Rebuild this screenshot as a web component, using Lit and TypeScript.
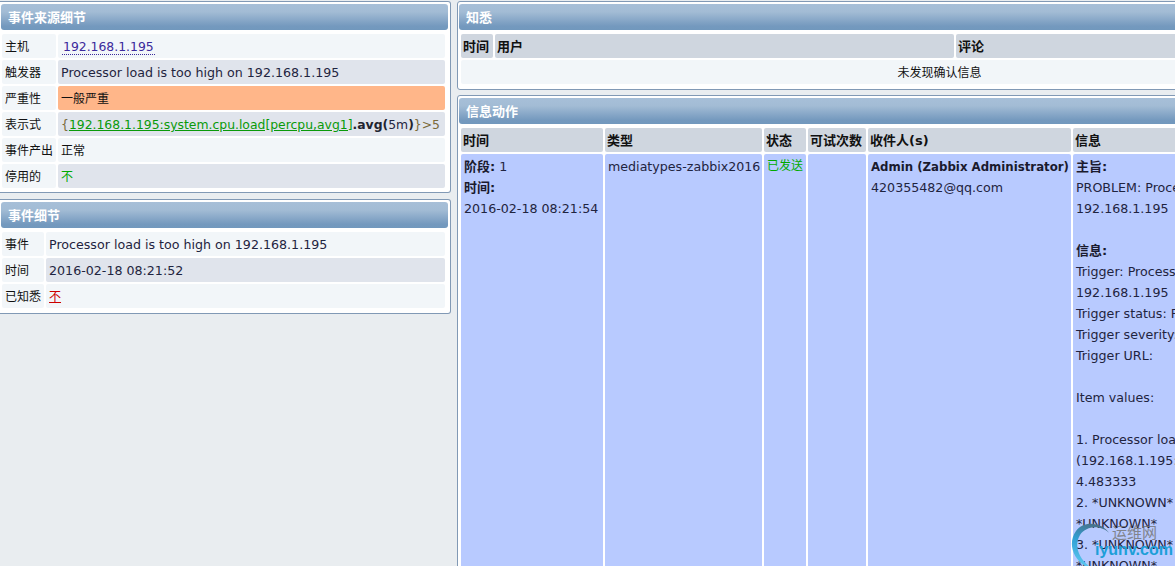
import { LitElement, html, css } from "lit";
import { customElement } from "lit/decorators.js";

const msg = ["PROBLEM: Processor load is too high on", "192.168.1.195", "\u00a0"];
const msg2 = [
  "Trigger: Processor load is too high on", "192.168.1.195", "Trigger status: PROBLEM", "Trigger severity: Average", "Trigger URL:", "\u00a0",
  "Item values:", "\u00a0", "1. Processor load (1 min average per core)", "(192.168.1.195:system.cpu.load[percpu,avg1]):", "4.483333",
  "2. *UNKNOWN* (*UNKNOWN*:*UNKNOWN*):", "*UNKNOWN*", "3. *UNKNOWN* (*UNKNOWN*:*UNKNOWN*):", "*UNKNOWN*",
];

@customElement("app-root")
export class AppRoot extends LitElement {
  static styles = css`
    :host {
      display: block; width: 1175px; height: 566px; overflow: hidden; position: relative;
      background: #e9edf0; color: #1f2430;
      font-family: "DejaVu Sans", "Noto Sans CJK SC", sans-serif; font-size: 12px;
    }
    .page { display: grid; grid-template-columns: 451px 960px; column-gap: 6px; padding-top: 1px; align-items: start; }
    .col { display: flex; flex-direction: column; gap: 6px; }
    .right { gap: 5px; }
    .panel { background: #fff; border: 1px solid #8199b5; border-left: 0; border-radius: 0 3px 3px 0; padding: 2px 2px 4px 1px; }
    .right .panel { border-left: 1px solid #8199b5; border-radius: 3px 0 0 3px; padding-left: 1px; padding-right: 0; }
    .left-panel { height: 192px; box-sizing: border-box; }
    .ev-panel { height: 115px; box-sizing: border-box; }
    .ack-panel { height: 89px; box-sizing: border-box; }
    .msg-panel { height: 600px; box-sizing: border-box; }
    .hd {
      height: 26px; line-height: 27px; padding-left: 7px; border-radius: 3px;
      background: linear-gradient(#a7bfd8 0%, #a3bcd5 30%, #7499be 85%, #7198bd 100%);
      color: #fff; font-weight: bold; font-size: 13px; margin-bottom: 4px;
    }
    .grid { display: grid; gap: 2px; padding-left: 1px; }
    .right .grid { padding-left: 2px; }
    .src { grid-template-columns: 54px 387px; grid-auto-rows: 24px; }
    .ev { grid-template-columns: 42px 399px; grid-auto-rows: 24px; }
    .ack { grid-template-columns: 32px 459px 459px; grid-auto-rows: 24px; }
    .acts { grid-template-columns: 142px 157px 42px 58px 203px 300px; grid-template-rows: 24px 500px; }
    .c { border-radius: 2px; line-height: 26px; padding-left: 3px; white-space: nowrap; background: #f2f6f9; overflow: hidden; color: #111; }
    .t { font-size: 12.65px; color: #1f2440; }
    .g { background: #e0e4ec; }
    .th { background: #cfd6df; font-weight: bold; color: #111; padding-left: 2px; font-size: 13px; }
    .sev { background: #ffb689; color: #111; }
    .host { color: #3b2a9b; border-bottom: 1px dotted #3b2a9b; margin-left: 1px; padding: 0 1px; font-size: 12.4px; }
    .ok { color: #0a0; }
    .red { color: #c00; text-decoration: underline; }
    .lnk { color: #0a9a0a; text-decoration: underline; }
    .expr { color: #7a6a3a; font-size: 12.4px; }
    .expr b { color: #1f2430; }
    .expr i { font-style: normal; color: #1f2440; }
    .center { grid-column: 1 / -1; text-align: center; }
    .b { background: #b8caff; line-height: 21px; padding: 2px 0 0 3px; }
    .b b { color: #1a1a2e; font-size: 13px; line-height: 0; }
    .b b.nm { font-size: 11.75px; }
    .mark { position: absolute; left: 1070px; top: 520px; width: 105px; height: 46px; pointer-events: none; }
    .mark svg { position: absolute; left: 0; top: 0; }
    .m1 { position: absolute; left: 42px; top: 2px; font-size: 15px; line-height: 22px; color: #777; opacity: .85; }
    .m2 { position: absolute; left: 25px; top: 21px; font-family: "Liberation Sans", sans-serif; font-size: 16px; font-weight: bold; color: #1d9fd8; line-height: 18px; }
  `;

  render() {
    return html`
      <div class="page">
        <div class="col">
          <section class="panel left-panel">
            <div class="hd">事件来源细节</div>
            <div class="grid src">
              <div class="c">主机</div><div class="c"><span class="host">192.168.1.195</span></div>
              <div class="c">触发器</div><div class="c t g">Processor load is too high on 192.168.1.195</div>
              <div class="c">严重性</div><div class="c sev">一般严重</div>
              <div class="c">表示式</div><div class="c g expr">{<span class="lnk">192.168.1.195:system.cpu.load[percpu,avg1]</span><b>.avg(</b><i>5m</i><b>)</b>}&gt;5</div>
              <div class="c">事件产出</div><div class="c">正常</div>
              <div class="c">停用的</div><div class="c g ok">不</div>
            </div>
          </section>
          <section class="panel ev-panel">
            <div class="hd">事件细节</div>
            <div class="grid ev">
              <div class="c">事件</div><div class="c t">Processor load is too high on 192.168.1.195</div>
              <div class="c">时间</div><div class="c t g">2016-02-18 08:21:52</div>
              <div class="c">已知悉</div><div class="c"><span class="red">不</span></div>
            </div>
          </section>
        </div>
        <div class="col right">
          <section class="panel ack-panel">
            <div class="hd">知悉</div>
            <div class="grid ack">
              <div class="c th">时间</div><div class="c th">用户</div><div class="c th">评论</div>
              <div class="c center">未发现确认信息</div>
            </div>
          </section>
          <section class="panel msg-panel">
            <div class="hd">信息动作</div>
            <div class="grid acts">
              <div class="c th">时间</div><div class="c th">类型</div><div class="c th">状态</div><div class="c th">可试次数</div><div class="c th">收件人(s)</div><div class="c th">信息</div>
              <div class="c b t"><b>阶段:</b> 1<br /><b>时间:</b><br />2016-02-18 08:21:54</div>
              <div class="c b t">mediatypes-zabbix2016</div>
              <div class="c b"><span class="ok">已发送</span></div>
              <div class="c b"></div>
              <div class="c b t"><b class="nm">Admin (Zabbix Administrator)</b><br />420355482@qq.com</div>
              <div class="c b t"><b>主旨:</b><br />${msg.map((l) => html`${l}<br />`)}<b>信息:</b><br />${msg2.map((l) => html`${l}<br />`)}</div>
            </div>
          </section>
        </div>
      </div>
      <div class="mark">
        <svg width="50" height="46" viewBox="0 0 50 46" fill="none">
          <defs>
            <linearGradient id="wm" x1="0.6" y1="0" x2="0.3" y2="1">
              <stop offset="0" stop-color="#4a6f86" />
              <stop offset="0.45" stop-color="#2f9fd4" />
              <stop offset="1" stop-color="#5cc6ee" />
            </linearGradient>
          </defs>
          <path d="M40 14C32 2 14 0 6 11C-2 22 2 38 15 46L19 46C8 37 4 25 10 15C17 5 32 5 40 14Z" fill="url(#wm)" />
        </svg>
        <span class="m1">运维网</span>
        <span class="m2">iyunv.com</span>
      </div>
    `;
  }
}
